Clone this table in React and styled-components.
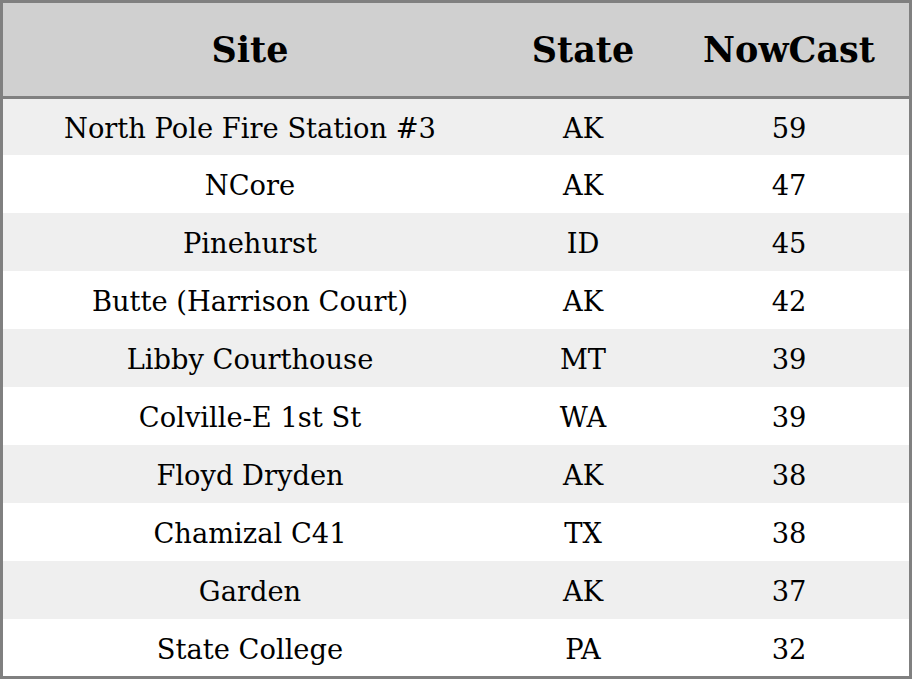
import React from "react";
import styled, { createGlobalStyle } from "styled-components";

const GlobalStyle = createGlobalStyle`
  html, body {
    margin: 0;
    padding: 0;
    background: #ffffff;
  }
  body {
    font-family: "DejaVu Serif", serif;
  }
`;

const Table = styled.table`
  width: 912px;
  border-collapse: collapse;
  border: 3px solid #808080;
  font-family: "DejaVu Serif", serif;
  color: #000;
`;

const HeadRow = styled.tr`
  background: #d0d0d0;
  border-bottom: 3px solid #808080;
`;

const HeadCell = styled.th`
  height: 93px;
  padding: 0;
  font-size: 35px;
  font-weight: bold;
  text-align: center;
  width: ${(p) => p.$w}px;
`;

const Row = styled.tr`
  background: ${(p) => (p.$alt ? "#efefef" : "#ffffff")};

  & > td {
    height: 55px;
  }
  &:first-child > td {
    height: 53px;
  }
  &:last-child > td {
    height: 54px;
  }
`;

const Cell = styled.td`
  padding: 3px 0 0;
  font-size: 27.3px;
  text-align: center;
`;

const rows = [
  ["North Pole Fire Station #3", "AK", 59],
  ["NCore", "AK", 47],
  ["Pinehurst", "ID", 45],
  ["Butte (Harrison Court)", "AK", 42],
  ["Libby Courthouse", "MT", 39],
  ["Colville-E 1st St", "WA", 39],
  ["Floyd Dryden", "AK", 38],
  ["Chamizal C41", "TX", 38],
  ["Garden", "AK", 37],
  ["State College", "PA", 32],
];

export default function App() {
  return (
    <>
      <GlobalStyle />
      <Table>
        <thead>
          <HeadRow>
            <HeadCell $w={494}>Site</HeadCell>
            <HeadCell $w={172}>State</HeadCell>
            <HeadCell $w={240}>NowCast</HeadCell>
          </HeadRow>
        </thead>
        <tbody>
          {rows.map(([site, state, value], i) => (
            <Row key={site} $alt={i % 2 === 0}>
              <Cell>{site}</Cell>
              <Cell>{state}</Cell>
              <Cell>{value}</Cell>
            </Row>
          ))}
        </tbody>
      </Table>
    </>
  );
}
